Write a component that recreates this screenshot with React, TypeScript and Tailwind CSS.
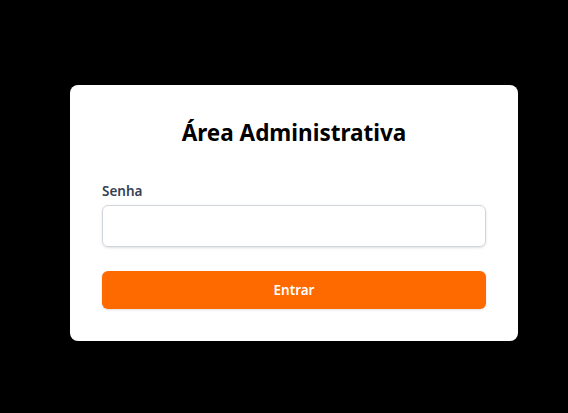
const App = () => {
  return (
    <div className="min-h-screen w-full bg-black pt-[85px] pl-[70px]" style={{ fontFamily: '"Noto Sans", "Open Sans", sans-serif' }}>
      <div className="w-[448px] rounded-lg bg-white p-8">
        <h1 className="mb-8 text-center text-[22.5px] font-bold leading-8 text-black">Área Administrativa</h1>
        <label className="mb-1 block text-[13.5px] font-semibold leading-5 text-gray-700">Senha</label>
        <input
          type="password"
          className="block h-[42px] w-full rounded-md border border-gray-300 px-3 shadow-sm outline-none"
        />
        <button className="mt-6 h-[38px] w-full rounded-md bg-[#ff6a00] text-[13.5px] font-semibold text-white shadow-sm">
          Entrar
        </button>
      </div>
    </div>
  );
};

export default App;
